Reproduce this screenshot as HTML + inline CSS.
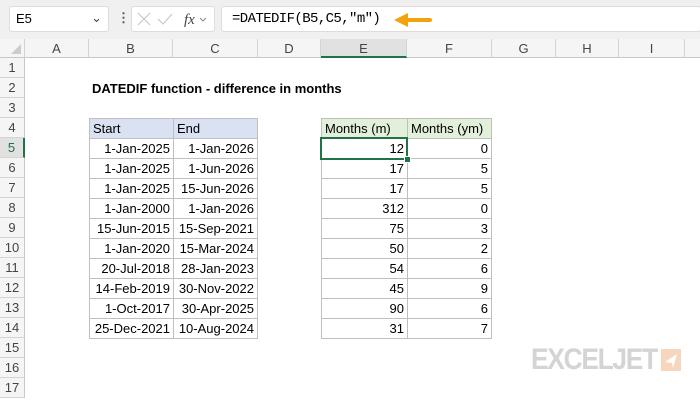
<!DOCTYPE html>
<html><head><style>
body{margin:0;width:700px;height:400px;position:relative;overflow:hidden;background:#fff;font-family:"Liberation Sans",Arial,sans-serif;font-size:13px;color:#000}
.a{position:absolute;box-sizing:border-box}
.ch{position:absolute;top:39px;height:19px;border-right:1px solid #d4d4d4;border-bottom:1px solid #c8c8c8;background:#f5f5f5;text-align:center;line-height:19px;color:#444;font-size:13px;box-sizing:border-box}
.rh{position:absolute;left:0;width:25px;height:20px;border-bottom:1px solid #d4d4d4;border-right:1px solid #c8c8c8;background:#f5f5f5;text-align:center;line-height:20px;color:#444;box-sizing:border-box}
.c{position:absolute;height:21px;border:1px solid #bfbfbf;box-sizing:border-box;line-height:19px;padding:0 3px;white-space:nowrap}
.r{text-align:right}
</style></head><body>
<div class="a" style="left:0;top:0;width:700px;height:39px;background:#f0f0f0"></div>
<div class="a" style="left:9px;top:6px;width:100px;height:26px;background:#fff;border:1px solid #dcdcdc;border-radius:3px;padding:4px 6px;font-size:13px">E5<span style="position:absolute;right:6px;top:3px;color:#444">&#8964;</span></div>
<div class="a" style="left:117px;top:10px;color:#555;font-weight:bold">&#8942;</div>
<div class="a" style="left:131px;top:6px;width:84px;height:26px;background:#fff;border:1px solid #dcdcdc;border-radius:3px"></div>
<svg class="a" style="left:136px;top:10px" width="80" height="18"><path d="M2 3l12 12M14 3L2 15" stroke="#c8c8c8" stroke-width="1.2"/><path d="M22 9l5 5 9-10" stroke="#c8c8c8" stroke-width="1.2" fill="none"/><text x="48" y="14" font-family="Liberation Serif" font-style="italic" font-size="15" fill="#444">fx</text><path d="M64 8l3 3 3-3" stroke="#888" fill="none"/></svg>
<div class="a" style="left:221px;top:6px;width:480px;height:26px;background:#fff;border:1px solid #dcdcdc;border-radius:3px;padding:4px 10px;font-family:'Liberation Mono',monospace;font-size:14px;letter-spacing:-0.6px">=DATEDIF(B5,C5,"m")</div>
<svg class="a" style="left:392px;top:12px" width="40" height="16"><path d="M14 8H38" stroke="#f2a20c" stroke-width="4" stroke-linecap="round"/><path d="M2 8L16 1V15Z" fill="#f2a20c"/></svg>
<div class="ch" style="left:0;width:25px"></div>
<svg class="a" style="left:10px;top:43px" width="12" height="12"><path d="M11 1V11H1Z" fill="#ccc"/></svg>
<div class="ch" style="left:25px;width:64px">A</div>
<div class="ch" style="left:89px;width:84px">B</div>
<div class="ch" style="left:173px;width:85px">C</div>
<div class="ch" style="left:258px;width:63px">D</div>
<div class="ch" style="left:321px;width:86px;background:#e1e1e1;border-bottom:2px solid #217346">E</div>
<div class="ch" style="left:407px;width:85px">F</div>
<div class="ch" style="left:492px;width:64px">G</div>
<div class="ch" style="left:556px;width:63px">H</div>
<div class="ch" style="left:619px;width:66px">I</div>
<div class="ch" style="left:685px;width:30px"></div>
<div class="rh" style="top:58px">1</div><div class="rh" style="top:78px">2</div><div class="rh" style="top:98px">3</div><div class="rh" style="top:118px">4</div>
<div class="rh" style="top:138px;background:#e1e1e1;border-right:2px solid #217346;color:#217346">5</div>
<div class="rh" style="top:158px">6</div><div class="rh" style="top:178px">7</div><div class="rh" style="top:198px">8</div><div class="rh" style="top:218px">9</div><div class="rh" style="top:238px">10</div><div class="rh" style="top:258px">11</div><div class="rh" style="top:278px">12</div><div class="rh" style="top:298px">13</div><div class="rh" style="top:318px">14</div><div class="rh" style="top:338px">15</div><div class="rh" style="top:358px">16</div><div class="rh" style="top:378px">17</div>
<div class="a" style="left:92px;top:81px;font-weight:bold;font-size:13px">DATEDIF function - difference in months</div>
<div class="c" style="left:89px;top:118px;width:85px;background:#d9e1f2">Start</div>
<div class="c" style="left:173px;top:118px;width:85px;background:#d9e1f2">End</div>
<div class="c" style="left:321px;top:118px;width:87px;background:#e2efda">Months (m)</div>
<div class="c" style="left:407px;top:118px;width:85px;background:#e2efda">Months (ym)</div>
<div id="rows"></div>
<script>
var d=[["1-Jan-2025","1-Jan-2026",12,0],["1-Jan-2025","1-Jun-2026",17,5],["1-Jan-2025","15-Jun-2026",17,5],["1-Jan-2000","1-Jan-2026",312,0],["15-Jun-2015","15-Sep-2021",75,3],["1-Jan-2020","15-Mar-2024",50,2],["20-Jul-2018","28-Jan-2023",54,6],["14-Feb-2019","30-Nov-2022",45,9],["1-Oct-2017","30-Apr-2025",90,6],["25-Dec-2021","10-Aug-2024",31,7]];
var h="";d.forEach(function(r,i){var t=138+i*20;
h+='<div class="c r" style="left:89px;top:'+t+'px;width:85px">'+r[0]+'</div><div class="c r" style="left:173px;top:'+t+'px;width:85px">'+r[1]+'</div><div class="c r" style="left:321px;top:'+t+'px;width:87px">'+r[2]+'</div><div class="c r" style="left:407px;top:'+t+'px;width:85px">'+r[3]+'</div>';});
document.getElementById("rows").innerHTML=h;
</script>
<div class="a" style="left:320px;top:137px;width:88px;height:23px;border:2px solid #217346"></div>
<div class="a" style="left:405px;top:157px;width:5px;height:5px;background:#217346;outline:1px solid #fff"></div>
<div class="a" style="left:531px;top:344px;font-size:30px;line-height:31px;font-weight:bold;color:#d4d4d4;letter-spacing:-1.5px;transform:scaleX(0.88);transform-origin:left">EXCELJET</div>
<div class="a" style="left:661px;top:349px;width:20px;height:22px;background:#f8d5bd"></div>
<svg class="a" style="left:663px;top:352px" width="17" height="17"><path d="M14 2L2 10 9 11 10 16Z" fill="#fff"/></svg>
</body></html>
